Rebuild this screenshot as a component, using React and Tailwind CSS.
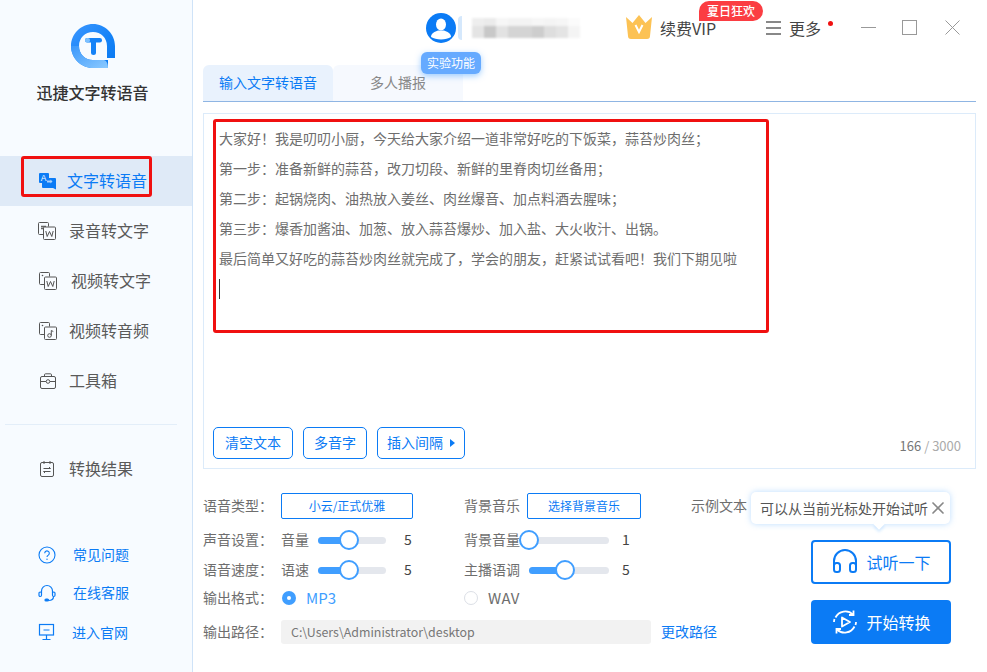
import React from 'react'
import { X } from 'lucide-react'

const font = { fontFamily: '"Noto Sans CJK SC", "Noto Sans", sans-serif' }

function Logo() {
    return (
        <svg width="46" height="46" viewBox="0 0 46 46">
            <defs>
                <linearGradient id="logoRing" x1="0" y1="0" x2="1" y2="1">
                    <stop offset="0" stopColor="#3c97ff" />
                    <stop offset="0.6" stopColor="#1482f7" />
                    <stop offset="1" stopColor="#0a78f0" />
                </linearGradient>
                <linearGradient id="logoTail" x1="0" y1="0" x2="1" y2="1">
                    <stop offset="0" stopColor="#3a97fb" />
                    <stop offset="1" stopColor="#8ccaff" />
                </linearGradient>
            </defs>
            <path d="M45 35V23C45 11 35 1 23 1S1 11 1 23 11 45 23 45H38V37H23C15 37 9 31 9 23S15 9 23 9 37 15 37 23V35Z" fill="url(#logoRing)" />
            <path d="M1 23C1 35 11 45 23 45H38C38 41 37 38 34 37H23C15 37 9 31 9 23Z" fill="url(#logoTail)" />
            <rect x="15" y="15" width="17" height="4.500" rx="2.200" fill="#1482f7" />
            <rect x="21" y="15" width="5" height="17" rx="2.500" fill="#1482f7" />
            <rect x="15" y="15" width="5" height="4.500" rx="2.200" fill="#7cc0ff" />
        </svg>
    )
}

function TranslateIcon() {
    return (
        <svg width="18" height="18" viewBox="0 0 18 18">
            <path d="M4 6h13a1 1 0 0 1 1 1v10.500l-3-1.500H5a1 1 0 0 1-1-1z" fill="#0b7bf5" />
            <rect x="1" y="1" width="10" height="10" rx="1" fill="#0b7bf5" />
            <text x="2.700" y="9" fontSize="8.500" fill="#fff" fontFamily="Liberation Sans">A</text>
            <path d="M9 8.500h3.500v-1l2 2-2 2v-1H9z" fill="#a9d2fb" />
        </svg>
    )
}

function DocWord({ kind }) {
    return (
        <svg width="18" height="18" viewBox="0 0 18 18" fill="none" stroke="#555" strokeWidth="1">
            <path d="M6.500 12.500H1.500a1 1 0 0 1-1-1V1.500a1 1 0 0 1 1-1h8a1 1 0 0 1 1 1v3" />
            {kind === 'audio' && <path d="M3 4.500h5M3 6.500h5" stroke="#666" strokeWidth="1.500" />}
            {kind !== 'audio' && <circle cx="3.500" cy="3.500" r="0.800" fill="#555" stroke="none" />}
            <rect x="5.500" y="5" width="12" height="12.500" rx="1" fill="#f8fbff" />
            {kind === 'music' ? (
                <>
                    <circle cx="10.500" cy="13.500" r="1.800" />
                    <path d="M12.300 13.500V8.500l2 1" />
                </>
            ) : (
                <path d="M7.800 9l1.400 5.500L11.500 9.500l2.300 5L15.200 9" />
            )}
        </svg>
    )
}

function ToolboxIcon() {
    return (
        <svg width="18" height="18" viewBox="0 0 18 18" fill="none" stroke="#555" strokeWidth="1">
            <rect x="1.500" y="4.500" width="15" height="12" rx="1.500" />
            <path d="M5.500 4.500V2.800a1 1 0 0 1 1-1h5a1 1 0 0 1 1 1v1.700M1.500 9.500h5.500M11 9.500h5.500" />
            <circle cx="9" cy="9.500" r="1.800" />
        </svg>
    )
}

function ResultIcon() {
    return (
        <svg width="18" height="18" viewBox="0 0 18 18" fill="none" stroke="#555" strokeWidth="1">
            <rect x="2.500" y="2.500" width="13" height="14" rx="1.500" />
            <path d="M6 1v3M12 1v3M5.500 8.500h7l-1.500-1.500M12.500 11.500h-7l1.500 1.500" />
        </svg>
    )
}

function HelpIcon() {
    return (
        <svg width="18" height="18" viewBox="0 0 18 18" fill="none" stroke="#0b7bf5" strokeWidth="1.100">
            <circle cx="9" cy="9" r="8" />
            <path d="M6.700 7.200a2.300 2.300 0 1 1 3.600 1.900c-.8.500-1.300 1-1.300 1.900" />
            <circle cx="9" cy="13.200" r="0.700" fill="#0b7bf5" stroke="none" />
        </svg>
    )
}

function ServiceIcon() {
    return (
        <svg width="18" height="18" viewBox="0 0 18 18" fill="none" stroke="#0b7bf5" strokeWidth="1.200">
            <path d="M3.500 9V7a5.500 5.500 0 0 1 11 0v2" />
            <rect x="1" y="8" width="2.500" height="4.500" rx="1.200" />
            <rect x="14.500" y="8" width="2.500" height="4.500" rx="1.200" />
            <path d="M15.500 12.500c0 2.500-2 4-5 4" />
            <rect x="7" y="15" width="3.500" height="2" rx="1" fill="#0b7bf5" />
        </svg>
    )
}

function SiteIcon() {
    return (
        <svg width="18" height="18" viewBox="0 0 18 18" fill="none" stroke="#0b7bf5" strokeWidth="1.200">
            <rect x="1.500" y="1.500" width="14" height="10.500" />
            <path d="M5.500 7h6M8.500 12v4M4.500 16.500h8" />
        </svg>
    )
}

function UserIcon() {
    return (
        <svg width="30" height="30" viewBox="0 0 30 30">
            <circle cx="15" cy="15" r="15" fill="#0b7bf5" />
            <ellipse cx="15" cy="11.500" rx="5" ry="6" fill="#fff" />
            <path d="M5 24c0-4 4-5.500 7-6.500h6c3 1 7 2.500 7 6.500-2.500 1.500-6 2.500-10 2.500S7.500 25.500 5 24z" fill="#fff" />
        </svg>
    )
}

function Crown() {
    return (
        <svg width="28" height="24" viewBox="0 0 28 24">
            <path d="M1 2l6.500 6L14 0l6.500 8L27 2l-2 19a3 3 0 0 1-3 3H6a3 3 0 0 1-3-3z" fill="#fcc254" />
            <path d="M10.500 10l3.500 7 3.500-7" fill="none" stroke="#fff" strokeWidth="2" />
        </svg>
    )
}

function Slider({ width, percent }) {
    return (
        <div className={`${width} relative h-[7px] rounded-full bg-[#e4e7ed]`}>
            <div className="h-full rounded-full bg-[#409eff]" style={{ width: `${percent}%` }} />
            <div className="absolute top-1/2 -translate-x-1/2 -translate-y-1/2 w-5 h-5 rounded-full border-2 border-[#409eff] bg-white" style={{ left: `${percent}%` }} />
        </div>
    )
}

const navItems = [
    { label: '录音转文字', icon: <DocWord kind="audio" />, iconClass: 'ml-0', gap: 'ml-[13px] mb-[2px]' },
    { label: '视频转文字', icon: <DocWord kind="video" />, iconClass: 'ml-[1px]', gap: 'ml-[14px] mb-[2px]' },
    { label: '视频转音频', icon: <DocWord kind="music" />, iconClass: 'ml-[1px]', gap: 'ml-[12px] mb-[2px]' },
    { label: '工具箱', icon: <ToolboxIcon />, iconClass: 'ml-[1px]', gap: 'ml-[12px] mb-[2px]' },
]

const helpItems = [
    { label: '常见问题', icon: <HelpIcon />, rowClass: 'h-[38px]', gap: 'ml-[17px] mb-[1px]' },
    { label: '在线客服', icon: <ServiceIcon />, rowClass: 'h-[38px]', gap: 'ml-[17px] mb-[2px]' },
    { label: '进入官网', icon: <SiteIcon />, rowClass: 'h-[40px]', gap: 'ml-[16px]' },
]

const lines = [
    '大家好！我是叨叨小厨，今天给大家介绍一道非常好吃的下饭菜，蒜苔炒肉丝；',
    '第一步：准备新鲜的蒜苔，改刀切段、新鲜的里脊肉切丝备用；',
    '第二步：起锅烧肉、油热放入姜丝、肉丝爆音、加点料酒去腥味；',
    '第三步：爆香加酱油、加葱、放入蒜苔爆炒、加入盐、大火收汁、出锅。',
    '最后简单又好吃的蒜苔炒肉丝就完成了，学会的朋友，赶紧试试看吧！我们下期见啦',
]

// blurred account name, two rows of grey cells
const mosaicTop = ['bg-[#eeeeee]', 'bg-[#ebebeb]', 'bg-[#f6f6f6]', 'bg-[#f3f3f3]', 'bg-[#f3f3f3]', 'bg-[#f6f6f6]', 'bg-[#f4f4f4]', 'bg-[#f6f6f6]', 'bg-[#fbfbfb]']
const mosaicBottom = ['bg-[#e4e4e4]', 'bg-[#c8c8c8]', 'bg-[#e2e2e2]', 'bg-[#d4d4d4]', 'bg-[#d4d4d4]', 'bg-[#cdcdcd]', 'bg-[#dedede]', 'bg-[#e4e4e4]', 'bg-[#f4f4f4]']

function Sidebar() {
    return (
        <aside className="w-[193px] shrink-0 h-full bg-[#f7fbff] border-r border-[#cfe3f8] flex flex-col">
            <div className="h-[156px] flex flex-col items-center pt-[23px] pr-[7px]">
                <Logo />
                <div className="mt-[11px] text-[16px] leading-6 font-medium text-[#333]">迅捷文字转语音</div>
            </div>
            <div className="relative h-[50px] bg-[#dfeaf7] flex items-center pl-[38px] text-[#0b7bf5]">
                <TranslateIcon />
                <span className="ml-[11px] mb-[2px] text-[16px]">文字转语音</span>
                <div className="absolute left-[21px] top-0 w-[131px] h-[41px] border-[3px] border-[#f01010] rounded-[3px]" />
            </div>
            {navItems.map(item => (
                <div key={item.label} className="h-[50px] flex items-center pl-[38px] text-[16px] text-[#5a5a5a]">
                    <span className={item.iconClass}>{item.icon}</span>
                    <span className={item.gap}>{item.label}</span>
                </div>
            ))}
            <div className="mt-[18px] ml-[5px] w-[172px] h-px bg-[#e3eef9]" />
            <div className="mt-[19px] h-[50px] flex items-center pl-[38px] text-[16px] text-[#5a5a5a]">
                <ResultIcon />
                <span className="ml-[13px] mb-[2px]">转换结果</span>
            </div>
            <div className="mt-[42px] flex flex-col">
                {helpItems.map(item => (
                    <div key={item.label} className={`${item.rowClass} flex items-center pl-[38px] text-[14px] text-[#0b7bf5]`}>
                        {item.icon}
                        <span className={item.gap}>{item.label}</span>
                    </div>
                ))}
            </div>
        </aside>
    )
}

function TopBar() {
    return (
        <div className="relative h-[65px] flex items-center">
            <div className="ml-[233px] mt-[-10px] h-[30px]">
                <UserIcon />
            </div>
            <div className="ml-[2px] mt-[-10px] w-[4px] h-[24px] rounded-l-full bg-[#d5e8fc] blur-[0.500px]" />
            <div className="ml-[10px] mt-[-10px] w-[108px] flex flex-col blur-[1px]">
                <div className="flex h-[8px]">
                    {mosaicTop.map((c, i) => (
                        <div key={i} className={`${c} w-[12px] h-full`} />
                    ))}
                </div>
                <div className="flex h-[12px]">
                    {mosaicBottom.map((c, i) => (
                        <div key={i} className={`${c} w-[12px] h-full`} />
                    ))}
                </div>
            </div>
            <div className="absolute left-[228px] top-[52px] h-[22px] w-[60px] rounded-[6px] bg-[#66aaff] shadow-[0_2px_6px_rgba(64,158,255,0.5)] text-white text-[12px] flex items-center justify-center z-10">实验功能</div>
            <div className="ml-[45px] mt-[-12px] h-[24px]">
                <Crown />
            </div>
            <div className="ml-[7px] mt-[-10px] text-[16px] text-[#444]">续费VIP</div>
            <div className="absolute left-[506px] top-[1px] h-[20px] w-[64px] rounded-[10px] rounded-bl-none bg-[#fb3d42] text-white text-[12px] font-medium flex items-center justify-center">夏日狂欢</div>
            <div className="ml-[50px] mt-[-10px] flex flex-col gap-[4px] w-[15px]">
                <div className="h-[2px] bg-[#888]" />
                <div className="h-[2px] bg-[#888]" />
                <div className="h-[2px] bg-[#888]" />
            </div>
            <div className="ml-[8px] mt-[-10px] text-[16px] text-[#444]">更多</div>
            <div className="ml-[7px] mt-[-19px] w-[5px] h-[5px] rounded-full bg-[#f01010]" />
            <div className="ml-[28px] mt-[-10px] w-[15px] h-px bg-[#999]" />
            <div className="ml-[26px] mt-[-10px] w-[15px] h-[15px] border border-[#999]" />
            <svg width="15" height="15" viewBox="0 0 15 15" className="ml-[28px] mt-[-10px]" stroke="#999" strokeWidth="1">
                <path d="M0.500 0.500l14 14M14.500 0.500l-14 14" />
            </svg>
        </div>
    )
}

function SettingsRow({ className, children }) {
    return <div className={`flex items-center [&>span]:mb-[2px] ${className}`}>{children}</div>
}

export default function App() {
    return (
        <div style={font} className="w-[987px] h-[672px] flex bg-white overflow-hidden">
            <Sidebar />
            <main className="flex-1 flex flex-col pl-[10px] pr-[11px] min-w-0">
                <div className="-ml-[10px] -mr-[11px]">
                    <TopBar />
                </div>

                {/* tabs */}
                <div className="flex h-[37px] border-b border-[#8fb5e3] text-[14px]">
                    <div className="w-[130px] h-[36px] pb-[2px] rounded-t-[6px] bg-[#e9f2fd] text-[#0b7bf5] flex items-center justify-center">输入文字转语音</div>
                    <div className="w-[130px] h-[36px] pb-[2px] rounded-t-[6px] bg-[#f6f9fe] text-[#888] flex items-center justify-center">多人播报</div>
                </div>

                {/* editor */}
                <div className="relative mt-[11px] h-[356px] border border-[#dcebfa] flex flex-col">
                    <div className="pl-[15px] pt-[9px] text-[14px] leading-[30px] text-[#6e6e6e]">
                        {lines.map(line => (
                            <div key={line}>{line}</div>
                        ))}
                        <div className="mt-[6px] w-px h-[20px] bg-[#333]" />
                    </div>
                    <div className="absolute left-[9px] top-[5px] w-[556px] h-[214px] border-[3px] border-[#f01010] rounded-[3px]" />
                    <div className="mt-auto pl-[9px] pr-[14px] pb-[9px] flex items-center gap-[10px] text-[14px] text-[#0b7bf5]">
                        <button className="h-[32px] w-[80px] pb-[2px] rounded-[5px] border border-[#0b7bf5]">清空文本</button>
                        <button className="h-[32px] w-[64px] pb-[2px] rounded-[5px] border border-[#0b7bf5]">多音字</button>
                        <button className="h-[32px] w-[88px] pb-[2px] rounded-[5px] border border-[#0b7bf5] flex items-center justify-center gap-[7px]">
                            插入间隔
                            <span className="w-0 h-0 mt-[2px] border-y-[4px] border-y-transparent border-l-[5px] border-l-[#0b7bf5]" />
                        </button>
                        <div className="ml-auto text-[13px] text-[#777] mt-[6px]">166 <span className="text-[#aaa]">/ 3000</span></div>
                    </div>
                </div>

                {/* settings */}
                <div className="relative flex mt-[24px] text-[14px] text-[#6e6e6e]">
                    <div className="w-[608px] shrink-0">
                        <SettingsRow className="h-[26px]">
                            <span className="w-[78px]">语音类型：</span>
                            <button className="w-[132px] h-[26px] rounded-[2px] border border-[#0b7bf5] text-[12px] text-[#0b7bf5]">小云/正式优雅</button>
                            <span className="ml-[51px] w-[63px]">背景音乐</span>
                            <button className="w-[114px] h-[26px] rounded-[2px] border border-[#0b7bf5] text-[12px] text-[#0b7bf5]">选择背景音乐</button>
                            <span className="ml-[50px]">示例文本</span>
                        </SettingsRow>
                        <SettingsRow className="h-[30px] mt-[6px]">
                            <span className="w-[78px]">声音设置：</span>
                            <span className="w-[37px]">音量</span>
                            <Slider width="w-[68px]" percent={46} />
                            <span className="ml-[18px] w-[60px] text-[#444]">5</span>
                            <span className="w-[65px]">背景音量</span>
                            <Slider width="w-[80px]" percent={0} />
                            <span className="ml-[13px] text-[#444]">1</span>
                        </SettingsRow>
                        <SettingsRow className="h-[30px]">
                            <span className="w-[78px]">语音速度：</span>
                            <span className="w-[37px]">语速</span>
                            <Slider width="w-[68px]" percent={46} />
                            <span className="ml-[18px] w-[60px] text-[#444]">5</span>
                            <span className="w-[65px]">主播语调</span>
                            <Slider width="w-[80px]" percent={45} />
                            <span className="ml-[13px] text-[#444]">5</span>
                        </SettingsRow>
                        <SettingsRow className="h-[26px]">
                            <span className="w-[79px]">输出格式：</span>
                            <div className="w-[14px] h-[14px] rounded-full bg-[#409eff] flex items-center justify-center">
                                <div className="w-[4px] h-[4px] rounded-full bg-white" />
                            </div>
                            <div className="ml-[10px] w-[158px] text-[15px] text-[#409eff]">MP3</div>
                            <div className="w-[14px] h-[14px] rounded-full border border-[#dcdfe6] bg-white" />
                            <div className="ml-[10px] text-[15px] tracking-[0.4px]">WAV</div>
                        </SettingsRow>
                        <SettingsRow className="h-[24px] mt-[9px]">
                            <span className="w-[78px]">输出路径：</span>
                            <div className="w-[370px] h-[24px] rounded-[3px] bg-[#f2f2f2] pl-[10px] text-[12.400px] text-[#777] leading-[24px]">C:\Users\Administrator\desktop</div>
                            <span className="ml-[10px] text-[#0b7bf5]">更改路径</span>
                        </SettingsRow>
                    </div>
                    <div className="flex flex-col pt-[47px] gap-[16px]">
                        <button className="w-[140px] h-[44px] pl-[1px] pb-[1px] rounded-[4px] border-2 border-[#0b7bf5] bg-white text-[#0b7bf5] text-[16px] flex items-center justify-center gap-[8px]">
                            <svg width="26" height="26" viewBox="0 0 26 26" fill="none" stroke="#0b7bf5" strokeWidth="2">
                                <path d="M2 18v-6a11 11 0 0 1 22 0v6" />
                                <rect x="2" y="14" width="6" height="9" rx="2.500" />
                                <rect x="18" y="14" width="6" height="9" rx="2.500" />
                            </svg>
                            试听一下
                        </button>
                        <button className="w-[140px] h-[44px] pl-[1px] pb-[1px] rounded-[4px] bg-[#0b7bf5] text-white text-[16px] flex items-center justify-center gap-[8px]">
                            <svg width="26" height="26" viewBox="0 0 26 26" fill="none" stroke="#fff" strokeWidth="1.800">
                                <path d="M3.500 8.500A11 11 0 0 1 21 5.500M22.500 17.500A11 11 0 0 1 5 20.500M2 13a11 11 0 0 1 .500-3M24 13a11 11 0 0 1-.500 3" />
                                <path d="M21.500 1.500V6h-4.500M4.500 24.500V20h4.500" />
                                <path d="M10 8.500l8 4.500-8 4.500z" strokeLinejoin="round" />
                            </svg>
                            开始转换
                        </button>
                    </div>
                    <div className="absolute left-[548px] top-[-1px] w-[199px] h-[32px] rounded-[5px] bg-white shadow-[0_0_6px_rgba(64,158,255,0.35)] flex items-center pl-[9px] text-[14px] text-[#555] z-10">
                        可以从当前光标处开始试听
                        <X size={20} strokeWidth={2} className="text-[#888]" />
                        <div className="absolute left-[124px] top-[28px] w-[8px] h-[8px] rotate-45 bg-white shadow-[2px_2px_3px_rgba(64,158,255,0.2)]" />
                    </div>
                </div>
            </main>
        </div>
    )
}
